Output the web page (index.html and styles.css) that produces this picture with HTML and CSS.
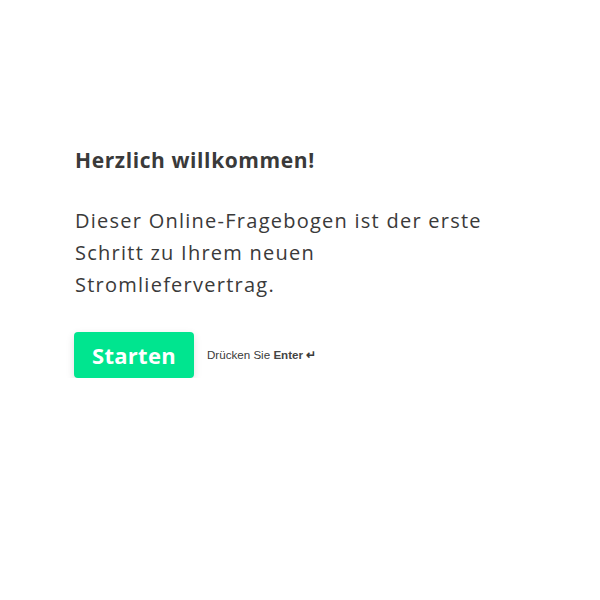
FILE: index.html
```html
<!DOCTYPE html>
<html lang="de">
<head>
<meta charset="utf-8">
<link rel="stylesheet" href="styles.css">
</head>
<body>
<main class="welcome">
  <h1 class="title">Herzlich willkommen!</h1>
  <p class="lead">Dieser Online-Fragebogen ist der erste Schritt zu Ihrem neuen Stromliefervertrag.</p>
  <div class="actions">
    <button class="start">Starten</button>
    <span class="hint">Drücken Sie <b>Enter</b> <span class="arrow">↵</span></span>
  </div>
</main>
</body>
</html>
```
FILE: styles.css
```css
html, body { margin: 0; padding: 0; background: #fff; }
.welcome {
  padding: 146px 0 0 74px;
  width: 430px;
  font-family: "Open Sans", "Noto Sans", sans-serif;
  color: #3a3a3a;
}
.title {
  margin: 0 0 0 1px;
  font-size: 21px;
  font-weight: 700;
  line-height: 28px;
  letter-spacing: 0.6px;
}
.lead {
  margin: 31px 0 0 1px;
  font-size: 20px;
  line-height: 32px;
  font-weight: 400;
  letter-spacing: 1.25px;
}
.actions {
  margin-top: 31px;
  display: flex;
  align-items: center;
  gap: 13px;
}
.start {
  width: 120px;
  height: 46px;
  border: none;
  border-radius: 4px;
  background: #00e58f;
  color: #fff;
  font-family: "Open Sans", "Noto Sans", sans-serif;
  font-weight: 700;
  font-size: 22px;
  letter-spacing: 0.3px;
  box-shadow: 0 3px 8px rgba(0,0,0,0.12);
  padding: 0;
}
.hint {
  font-family: "Liberation Sans", Arial, sans-serif;
  font-size: 11.6px;
  color: #3a3a3a;
}
.hint b { font-weight: 700; color: #444; }
.arrow { font-weight: 700; }
```
